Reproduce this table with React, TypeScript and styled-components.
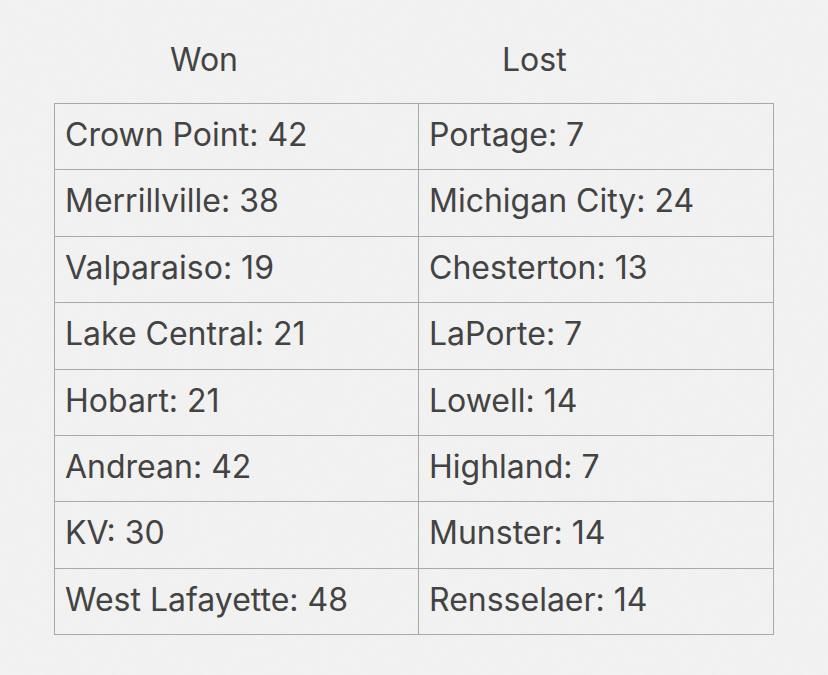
import styled, { createGlobalStyle } from "styled-components";

const paper = `url("data:image/svg+xml;utf8,<svg xmlns='http://www.w3.org/2000/svg' width='300' height='300'><filter id='n'><feTurbulence type='fractalNoise' baseFrequency='0.9' numOctaves='2' stitchTiles='stitch'/><feColorMatrix values='0 0 0 0 0.5 0 0 0 0 0.5 0 0 0 0 0.5 0 0 0 0.06 0'/></filter><rect width='300' height='300' filter='url(%23n)'/></svg>")`;

const GlobalStyle = createGlobalStyle`
    html, body {
        margin: 0;
        padding: 0;
        width: 828px;
        height: 675px;
        overflow: hidden;
        background-color: #f3f3f3;
        background-image: ${paper};
    }
    body {
        font-family: Inter, "Open Sans", sans-serif;
        color: #434343;
    }
`

const Page = styled.div`
    padding: 42px 0 0 54px;
`

const HeaderRow = styled.div`
    display: flex;
    height: 61px;
    font-size: 32px;
    line-height: 36px;
`

const HeaderCell = styled.div<{ $offset: number; $width: number }>`
    width: ${({ $width }) => $width}px;
    padding-left: ${({ $offset }) => $offset}px;
    box-sizing: border-box;
`

const Table = styled.div`
    display: grid;
    grid-template-columns: 364px 355px;
    width: 720px;
    border-top: 1px solid #a9a9a9;
    border-left: 1px solid #a9a9a9;
    box-sizing: border-box;
`

const Cell = styled.div`
    height: 66.4px;
    box-sizing: border-box;
    border-right: 1px solid #a9a9a9;
    border-bottom: 1px solid #a9a9a9;
    padding: 13px 0 0 10px;
    font-size: 32px;
    line-height: 36px;
    white-space: nowrap;
`

const rows: [string, string][] = [
    ["Crown Point: 42", "Portage: 7"],
    ["Merrillville: 38", "Michigan City: 24"],
    ["Valparaiso: 19", "Chesterton: 13"],
    ["Lake Central: 21", "LaPorte: 7"],
    ["Hobart: 21", "Lowell: 14"],
    ["Andrean: 42", "Highland: 7"],
    ["KV: 30", "Munster: 14"],
    ["West Lafayette: 48", "Rensselaer: 14"],
];

export default function App() {
    return (
        <>
            <GlobalStyle />
            <Page>
                <HeaderRow>
                    <HeaderCell $width={364} $offset={116}>Won</HeaderCell>
                    <HeaderCell $width={355} $offset={84}>Lost</HeaderCell>
                </HeaderRow>
                <Table>
                    {rows.map(([won, lost]) => (
                        <>
                            <Cell key={won}>{won}</Cell>
                            <Cell key={lost}>{lost}</Cell>
                        </>
                    ))}
                </Table>
            </Page>
        </>
    );
}
